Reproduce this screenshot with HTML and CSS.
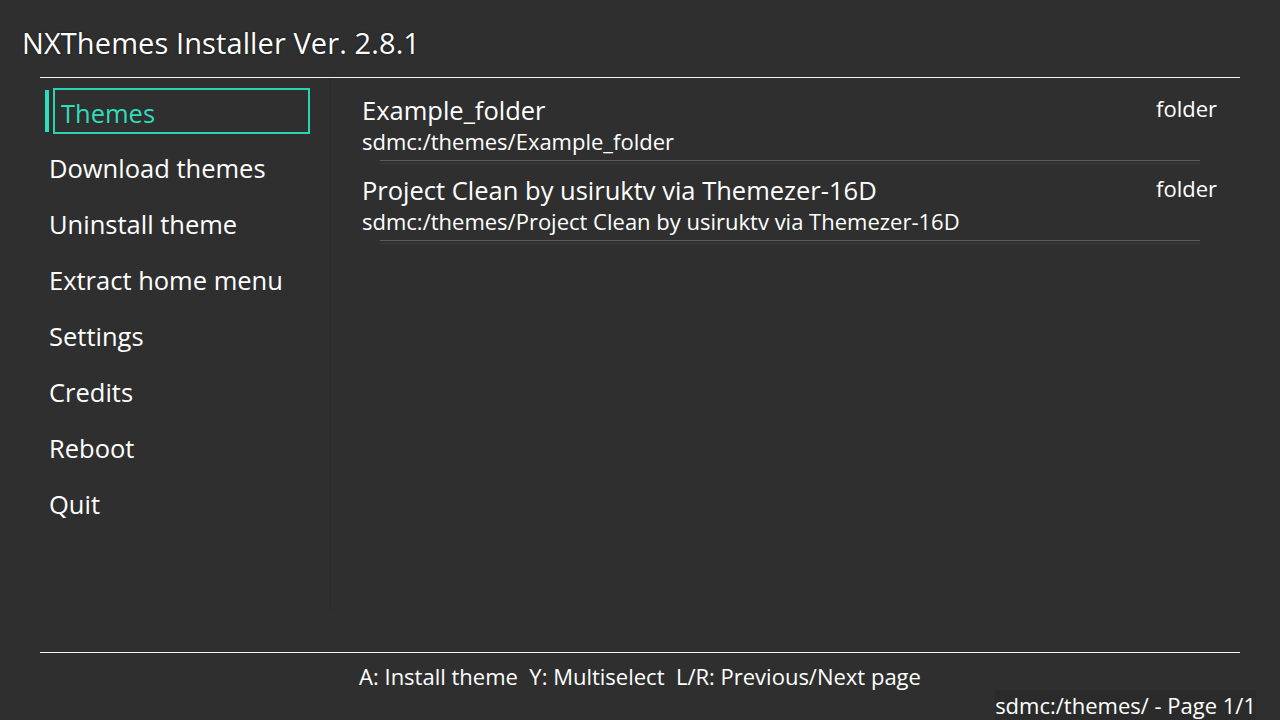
FILE: index.html
```html
<!DOCTYPE html>
<html lang="en">
<head>
    <meta charset="UTF-8">
    <meta name="viewport" content="width=device-width, initial-scale=1.0">
    <title>NXThemes Installer</title>
    <link rel="stylesheet" href="styles.css">
</head>
<body>
    <div class="screen">
        <header class="title-bar">
            <h1>NXThemes Installer Ver. 2.8.1</h1>
        </header>
        <div class="main">
            <nav class="sidebar">
                <div class="menu-item active">Themes</div>
                <div class="menu-item">Download themes</div>
                <div class="menu-item">Uninstall theme</div>
                <div class="menu-item">Extract home menu</div>
                <div class="menu-item">Settings</div>
                <div class="menu-item">Credits</div>
                <div class="menu-item">Reboot</div>
                <div class="menu-item">Quit</div>
            </nav>
            <section class="file-list">
                <div class="file-row">
                    <div class="file-head">
                        <span class="file-name">Example_folder</span>
                        <span class="file-type">folder</span>
                    </div>
                    <div class="file-path">sdmc:/themes/Example_folder</div>
                    <div class="file-sep"></div>
                </div>
                <div class="file-row">
                    <div class="file-head">
                        <span class="file-name">Project Clean by usiruktv via Themezer-16D</span>
                        <span class="file-type">folder</span>
                    </div>
                    <div class="file-path">sdmc:/themes/Project Clean by usiruktv via Themezer-16D</div>
                    <div class="file-sep"></div>
                </div>
            </section>
        </div>
        <footer class="footer">
            <div class="hints">A: Install theme&nbsp; Y: Multiselect&nbsp; L/R: Previous/Next page</div>
            <div class="status"><span>sdmc:/themes/ - Page 1/1</span></div>
        </footer>
    </div>
</body>
</html>
```

FILE: styles.css
```css
* { font-family: "Open Sans", "Noto Sans", sans-serif; box-sizing: border-box; }
body {
    margin: 0;
    background-color: #2f2f2f;
    color: #fff;
}
.screen {
    width: 1280px;
    height: 720px;
    display: flex;
    flex-direction: column;
    overflow: hidden;
}

/* title + line under it */
.title-bar {
    height: 78px;
    margin: 0 40px;
    border-bottom: 1px solid #f4f4f4;
}
.title-bar h1 {
    font-size: 29px;
    font-weight: normal;
    line-height: 40px;
    letter-spacing: 0.1px;
    margin: 0 0 0 -18px;
    padding-top: 23px;
    text-shadow: 0 0 2px #111;
}

.main {
    flex: 1;
    display: flex;
}

/* left menu */
.sidebar {
    width: 331px;
    height: 532px;
    padding: 10px 0 0 45px;
    border-right: 2px solid #2b2b2b;
}
.menu-item {
    position: relative;
    height: 46px;
    margin-bottom: 10px;
    padding-left: 4px;
    font-size: 25.5px;
    line-height: 48px;
    white-space: nowrap;
}
.menu-item.active {
    margin-left: 8px;
    width: 257px;
    padding-left: 6px;
    line-height: 46px;
    color: #2fdcbc;
    border: 2px solid #2bd3b3;
}
.menu-item.active::before {
    content: "";
    position: absolute;
    left: -10px;
    top: 0;
    width: 4px;
    height: 42px;
    background-color: #2fdcbc;
}

/* theme folders */
.file-list {
    flex: 1;
    padding: 17px 63px 0 31px;
}
.file-row {
    height: 80px;
}
.file-head {
    display: flex;
    justify-content: space-between;
    align-items: flex-start;
}
.file-name {
    font-size: 25.5px;
    line-height: 31px;
}
.file-type {
    font-size: 22px;
    line-height: 26px;
}
.file-path {
    font-size: 22px;
    line-height: 31px;
}
.file-sep {
    margin: 3px 17px 0 18px;
    height: 4px;
    border-top: 1px solid #5a5a5a;
    border-bottom: 1px solid #3c3c3c;
}

/* bottom hints */
.footer {
    height: 68px;
    margin: 0 40px;
    border-top: 1px solid #f4f4f4;
}
.hints {
    text-align: center;
    font-size: 22px;
    line-height: 28px;
    padding-top: 9px;
}
.status {
    text-align: right;
    margin-right: -16px;
    font-size: 22px;
    line-height: 28px;
    padding-top: 1px;
}
.status span {
    background-color: #2b2b2b;
}
```
